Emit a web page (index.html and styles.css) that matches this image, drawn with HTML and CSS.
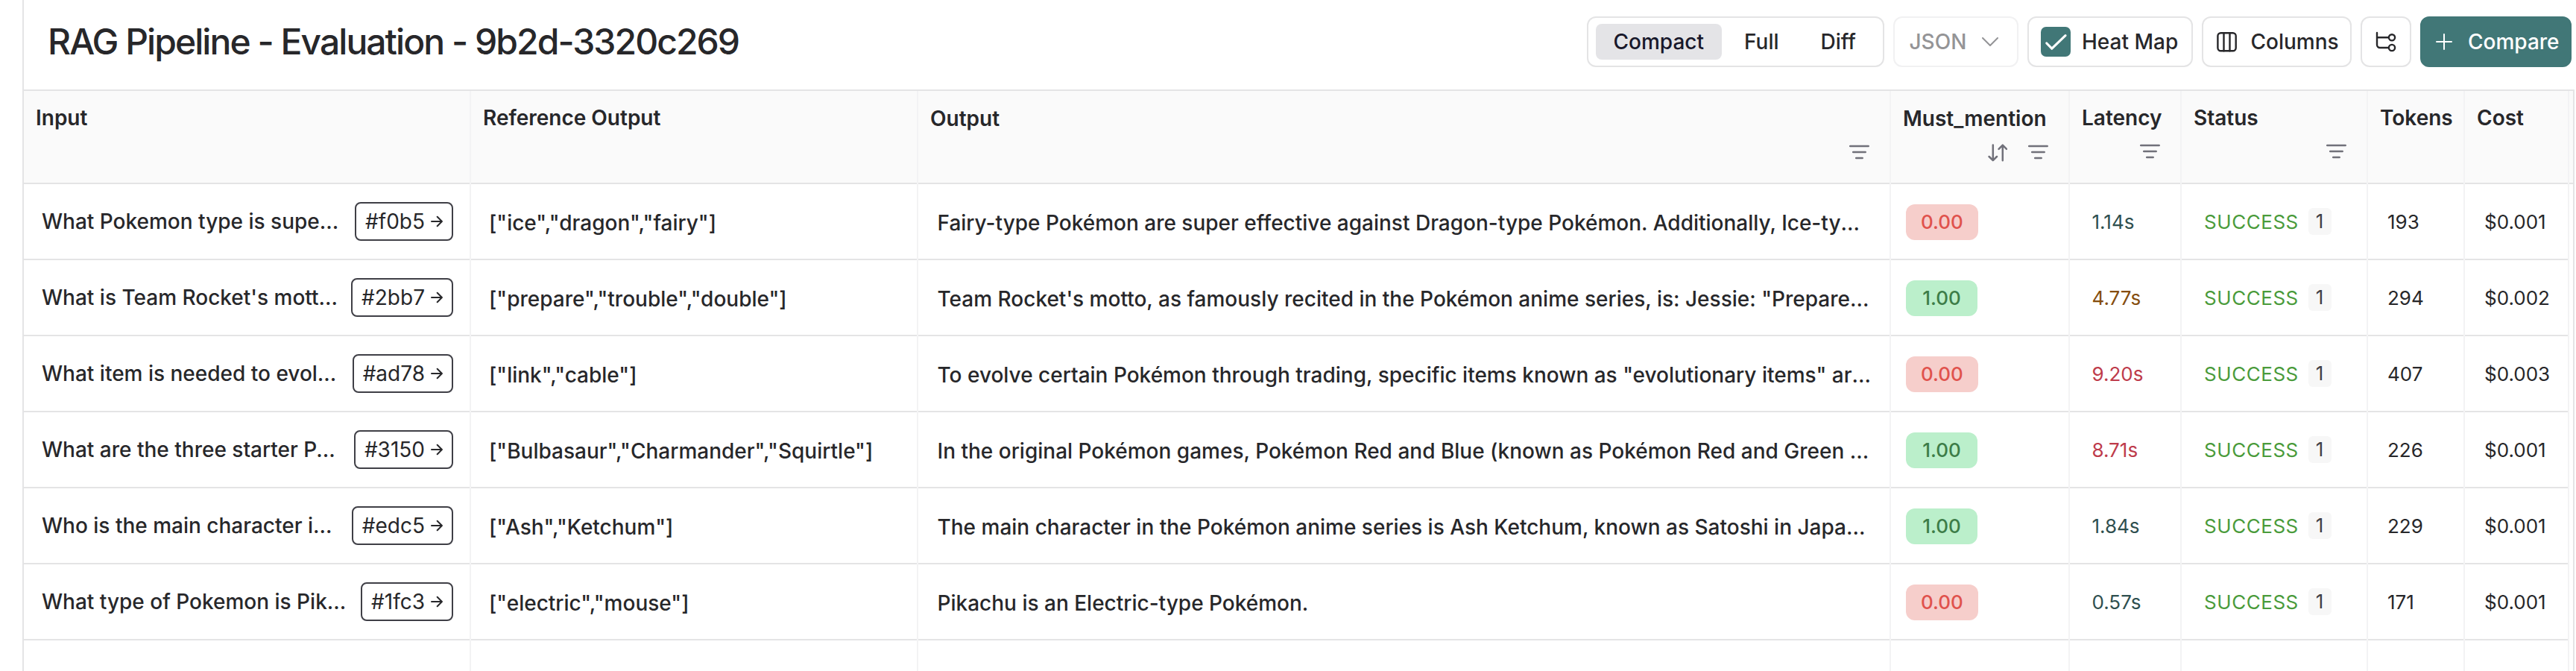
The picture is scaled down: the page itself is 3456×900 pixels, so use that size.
FILE: index.html
```html
<!DOCTYPE html>
<html lang="en">
<head>
<meta charset="utf-8">
<title>RAG Pipeline - Evaluation</title>
<link rel="stylesheet" href="styles.css">
</head>
<body>
<svg class="defs" width="0" height="0">
  <symbol id="filter" viewBox="0 0 27 22"><path d="M1.200 3h24.500M5.200 11h16.500M9.200 19h8.500"/></symbol>
  <symbol id="sort" viewBox="0 0 28 26"><path d="M8.800 3.600v20.500M3.600 19l5.200 5.200L14 19M21.800 24.200V3.700M16.600 8.900l5.200-5.200L27 8.900"/></symbol>
  <symbol id="arrow" viewBox="0 0 16 16"><path d="M1 8h14M8.700 1.800L14.900 8l-6.200 6.200"/></symbol>
</svg>
<main class="panel">
  <header class="topbar">
    <h1 class="title">RAG Pipeline - Evaluation - 9b2d-3320c269</h1>
    <div class="tools">
      <div class="segment"><span class="seg active">Compact</span><span class="seg">Full</span><span class="seg">Diff</span></div>
      <div class="btn json">JSON<svg width="22" height="12" viewBox="0 0 22 12"><path d="M1 1l10 10L21 1"/></svg></div>
      <div class="btn heat"><span class="check"><svg width="40" height="40" viewBox="0 0 40 40"><path d="M7.800 22l7 7.200L33 11.600"/></svg></span>Heat Map</div>
      <div class="btn cols"><svg width="28" height="28" viewBox="0 0 28 28"><rect x="1.400" y="2.200" width="24.300" height="24" rx="4"/><path d="M9.500 2.200v24M17.500 2.200v24"/></svg>Columns</div>
      <div class="btn tree"><svg width="28" height="28" viewBox="0 0 28 28"><path d="M2 2v16a4 4 0 0 0 4 4h11.500M2 8.300h15.500"/><circle cx="22" cy="8.300" r="4.100"/><circle cx="22" cy="22" r="4.100"/></svg></div>
      <div class="btn primary"><svg width="22" height="22" viewBox="0 0 22 22"><path d="M11 1v20M1 11h20"/></svg>Compare</div>
    </div>
  </header>
  <section class="table">
    <div class="row head">
      <div class="cell">Input</div>
      <div class="cell">Reference Output</div>
      <div class="cell low">Output<span class="acts"><svg class="filter"><use href="#filter"/></svg></span></div>
      <div class="cell low">Must_mention<span class="acts"><svg class="sort"><use href="#sort"/></svg><svg class="filter"><use href="#filter"/></svg></span></div>
      <div class="cell">Latency<span class="acts"><svg class="filter"><use href="#filter"/></svg></span></div>
      <div class="cell">Status<span class="acts"><svg class="filter"><use href="#filter"/></svg></span></div>
      <div class="cell">Tokens</div>
      <div class="cell">Cost</div>
    </div>
    <div class="row">
      <div class="cell input"><span class="q">What Pokemon type is supe...</span><span class="tag">#f0b5<svg><use href="#arrow"/></svg></span></div>
      <div class="cell text">["ice","dragon","fairy"]</div>
      <div class="cell text out">Fairy-type Pokémon are super effective against Dragon-type Pokémon. Additionally, Ice-ty<span class="dots">…</span></div>
      <div class="cell score"><span class="pill bad">0.00</span></div>
      <div class="cell lat fast">1.14s</div>
      <div class="cell status">SUCCESS<span class="count">1</span></div>
      <div class="cell num">193</div>
      <div class="cell num">$0.001</div>
    </div>
    <div class="row">
      <div class="cell input"><span class="q">What is Team Rocket's mott...</span><span class="tag">#2bb7<svg><use href="#arrow"/></svg></span></div>
      <div class="cell text">["prepare","trouble","double"]</div>
      <div class="cell text out">Team Rocket's motto, as famously recited in the Pokémon anime series, is: Jessie: "Prepare<span class="dots">…</span></div>
      <div class="cell score"><span class="pill good">1.00</span></div>
      <div class="cell lat mid">4.77s</div>
      <div class="cell status">SUCCESS<span class="count">1</span></div>
      <div class="cell num">294</div>
      <div class="cell num">$0.002</div>
    </div>
    <div class="row">
      <div class="cell input"><span class="q">What item is needed to evol...</span><span class="tag">#ad78<svg><use href="#arrow"/></svg></span></div>
      <div class="cell text">["link","cable"]</div>
      <div class="cell text out">To evolve certain Pokémon through trading, specific items known as "evolutionary items" ar<span class="dots">…</span></div>
      <div class="cell score"><span class="pill bad">0.00</span></div>
      <div class="cell lat slow">9.20s</div>
      <div class="cell status">SUCCESS<span class="count">1</span></div>
      <div class="cell num">407</div>
      <div class="cell num">$0.003</div>
    </div>
    <div class="row">
      <div class="cell input"><span class="q">What are the three starter P...</span><span class="tag">#3150<svg><use href="#arrow"/></svg></span></div>
      <div class="cell text">["Bulbasaur","Charmander","Squirtle"]</div>
      <div class="cell text out">In the original Pokémon games, Pokémon Red and Blue (known as Pokémon Red and Green <span class="dots">…</span></div>
      <div class="cell score"><span class="pill good">1.00</span></div>
      <div class="cell lat slow">8.71s</div>
      <div class="cell status">SUCCESS<span class="count">1</span></div>
      <div class="cell num">226</div>
      <div class="cell num">$0.001</div>
    </div>
    <div class="row">
      <div class="cell input"><span class="q">Who is the main character i...</span><span class="tag">#edc5<svg><use href="#arrow"/></svg></span></div>
      <div class="cell text">["Ash","Ketchum"]</div>
      <div class="cell text out">The main character in the Pokémon anime series is Ash Ketchum, known as Satoshi in Japa<span class="dots">…</span></div>
      <div class="cell score"><span class="pill good">1.00</span></div>
      <div class="cell lat fast">1.84s</div>
      <div class="cell status">SUCCESS<span class="count">1</span></div>
      <div class="cell num">229</div>
      <div class="cell num">$0.001</div>
    </div>
    <div class="row">
      <div class="cell input"><span class="q">What type of Pokemon is Pik...</span><span class="tag">#1fc3<svg><use href="#arrow"/></svg></span></div>
      <div class="cell text">["electric","mouse"]</div>
      <div class="cell text out">Pikachu is an Electric-type Pokémon.</div>
      <div class="cell score"><span class="pill bad">0.00</span></div>
      <div class="cell lat fast">0.57s</div>
      <div class="cell status">SUCCESS<span class="count">1</span></div>
      <div class="cell num">171</div>
      <div class="cell num">$0.001</div>
    </div>
    <div class="row last">
      <div class="cell"></div><div class="cell"></div><div class="cell"></div><div class="cell"></div><div class="cell"></div><div class="cell"></div><div class="cell"></div><div class="cell"></div>
    </div>
  </section>
</main>
</body>
</html>
```
FILE: styles.css
```css
* { box-sizing: border-box; }
html { height: 900px; overflow: hidden; }
body {
  margin: 0;
  height: 900px;
  overflow: hidden;
  background: #fff;
  color: #27272a;
  font: 500 28px/40px Inter, sans-serif;
}
svg { fill: none; stroke: currentColor; stroke-width: 2; stroke-linecap: round; stroke-linejoin: round; flex: none; }
.defs { display: none; }
.panel { margin-left: 30px; height: 900px; border-left: 2px solid #e4e4e5; overflow: hidden; }

.topbar { display: flex; align-items: center; justify-content: space-between; height: 120px; padding: 0 6px 8px 32px; }
.title { margin: 0; font-size: 48px; line-height: 60px; font-weight: 500; letter-spacing: -1.95px; white-space: nowrap; }
.tools { display: flex; gap: 12px; }
.segment, .btn { display: flex; align-items: center; height: 68px; border: 2px solid #e4e4e5; border-radius: 12px; }
.segment { padding: 0 10px; gap: 6px; width: 399px; }
.seg { height: 48px; line-height: 48px; padding: 0 24px; border-radius: 8px; }
.seg:last-child { margin-left: 2px; }
.active { background: #e4e4e7; color: #18182b; }
.json { width: 168.5px; padding: 0 20px; gap: 21px; color: #949496; border-color: #f1f1f2; }
.heat { width: 221.5px; padding-left: 16px; gap: 15px; }
.check { display: flex; width: 40px; height: 40px; border-radius: 7px; background: #417777; color: #fff; }
.check svg { stroke-width: 3.2; }
.cols { width: 201.5px; padding-left: 18px; gap: 18px; }
.cols svg, .tree svg { stroke-width: 2.4; }
.tree { width: 68px; justify-content: center; }
.primary { width: 203px; padding-left: 19px; gap: 21px; background: #417777; border-color: #417777; color: #fff; }

.table { border-top: 2px solid #e4e4e5; border-right: 2px solid #e4e4e5; width: 3422px; height: 780px; overflow: hidden; }
.row { display: grid; grid-template-columns: 600px 600px 1305px 240px 150px 250px 130px 140px; height: 102px; }
.cell { display: flex; align-items: center; padding-bottom: 2px; border-right: 2px solid #f3f3f4; box-shadow: inset 0 -2px #e4e4e5; white-space: nowrap; min-width: 0; }
.last { height: 41px; }
.last .cell { box-shadow: none; }
.head { height: 125px; background: #fafafa; box-shadow: inset 0 -2px #e4e4e5; font-weight: 600; }
.head .cell { flex-direction: column; align-items: flex-start; padding: 16px 0 0 16px; }
.head .low { padding-top: 17px; }
.acts { display: flex; align-items: center; gap: 28px; align-self: flex-end; height: 26px; margin: 12px 27px 0 0; color: #71717a; }
.acts svg { stroke-width: 2.5; }
.filter { width: 27px; height: 22px; }
.sort { width: 28px; height: 26px; }

.input { justify-content: space-between; padding: 0 22px 2px 24px; }
.tag { display: flex; align-items: center; gap: 8px; height: 52px; padding: 0 12px; border: 2px solid #3f3f46; border-radius: 8px; font-weight: 400; }
.tag svg { width: 16px; height: 16px; }
.text { padding: 4px 0 2px 24px; white-space: pre; }
.out { padding-left: 25.5px; }
.score { padding: 2px 0 2px 20px; font-size: 26px; }
.pill { min-width: 96px; height: 48px; line-height: 47px; padding: 0 20px; border-radius: 12px; text-align: center; }
.bad { background: #f6cecb; color: #e0524d; }
.good { background: #bbefcb; color: #3d7d48; }
.lat, .status, .num { font-size: 26px; font-weight: 400; line-height: 39px; }
.lat { padding-left: 29.5px; }
.fast { color: #2f4f4f; }
.mid { color: #854d0e; }
.slow { color: #be3b4b; }
.status { padding-left: 30px; gap: 13px; color: #4a9b3b; letter-spacing: .55px; }
.count { width: 31px; height: 36px; line-height: 35px; border-radius: 6px; background: #f7f7f7; color: #3f3f46; text-align: center; }
.num { padding-left: 26px; }
```
